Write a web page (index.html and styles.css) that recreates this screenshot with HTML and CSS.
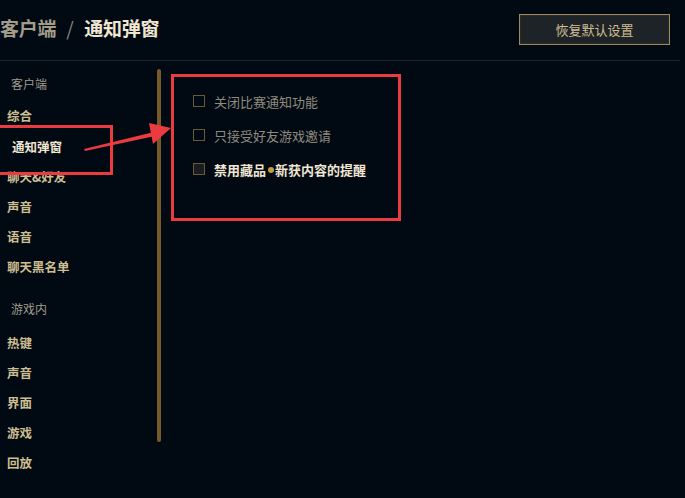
FILE: index.html
```html
<!DOCTYPE html>
<html lang="zh-CN">

<head>
    <meta charset="UTF-8">
    <meta name="viewport" content="width=device-width, initial-scale=1.0">
    <title>通知弹窗</title>
    <link rel="stylesheet" href="styles.css">
</head>

<body>
    <div class="page">
        <div class="header">
            <h1 class="title">
                <span class="crumb">客户端</span>
                <span class="sep">/</span>
                <span class="current">通知弹窗</span>
            </h1>
            <button class="reset">恢复默认设置</button>
        </div>

        <div class="main">
            <div class="sidebar">
                <div class="group-label">客户端</div>
                <div class="nav-item">综合</div>
                <div class="nav-item active">通知弹窗</div>
                <div class="nav-item">聊天&amp;好友</div>
                <div class="nav-item">声音</div>
                <div class="nav-item">语音</div>
                <div class="nav-item">聊天黑名单</div>

                <div class="group-label second">游戏内</div>
                <div class="nav-item first">热键</div>
                <div class="nav-item">声音</div>
                <div class="nav-item">界面</div>
                <div class="nav-item">游戏</div>
                <div class="nav-item">回放</div>
            </div>

            <div class="scrollbar"></div>

            <div class="content">
                <label class="option">
                    <span class="box"></span>
                    <span>关闭比赛通知功能</span>
                </label>
                <label class="option">
                    <span class="box"></span>
                    <span>只接受好友游戏邀请</span>
                </label>
                <label class="option bright">
                    <span class="box"></span>
                    <span>禁用藏品<i class="dot"></i>新获内容的提醒</span>
                </label>
            </div>
        </div>

        <!-- annotation overlay -->
        <div class="mark mark-nav"></div>
        <div class="mark mark-content"></div>
        <svg class="arrow" width="100" height="40" viewBox="0 0 100 40">
            <polygon points="0,38 70,21 71,25 1,40" fill="#ec3b3f" />
            <polygon points="65,12 87,17 69,33" fill="#ec3b3f" />
        </svg>
    </div>
</body>

</html>
```

FILE: styles.css
```css
body {
    margin: 0;
    padding: 0;
    background-color: #010a13;
    font-family: "Noto Sans CJK SC", "Noto Sans", sans-serif;
    color: #cdbe91;
    overflow: hidden;
}

.page {
    position: relative;
    width: 685px;
    height: 498px;
}

.header {
    display: flex;
    align-items: center;
    justify-content: space-between;
    height: 61px;
    padding: 0 10px 0 0;
    margin-right: 5px;
    border-bottom: 1px solid #1e2730;
    box-sizing: border-box;
}

.title {
    margin: -5px 0 0 0;
    font-size: 19px;
    font-weight: bold;
    letter-spacing: -0.3px;
}

.crumb {
    color: #a39c8b;
}

.sep {
    color: #8a8578;
    font-weight: normal;
    margin: 0 7px 0 6px;
}

.current {
    color: #f0e6d2;
}

.reset {
    width: 151px;
    height: 31px;
    margin-top: -2px;
    background-color: #1e2328;
    color: #cdbe91;
    border: 1px solid #9d8a5c;
    box-shadow: inset 0 0 0 1px #2a2a26;
    font-family: inherit;
    font-size: 13px;
    cursor: pointer;
}

.main {
    display: flex;
}

.sidebar {
    width: 157px;
    padding-top: 8px;
}

.group-label {
    padding-left: 11px;
    line-height: 30px;
    font-size: 12px;
    color: #a09b8c;
}

.group-label.second {
    margin-top: 12px;
}

.nav-item {
    padding-left: 7px;
    line-height: 30px;
    font-size: 12.5px;
    font-weight: bold;
    color: #cdbe91;
}

.group-label + .nav-item {
    margin-top: 2px;
}

.nav-item.active {
    padding-left: 12px;
    margin-top: 1px;
    color: #f0e6d2;
}

.nav-item.first {
    margin-top: 4px;
}

.scrollbar {
    width: 4px;
    height: 373px;
    margin-top: 8px;
    background-color: #785a28;
    border-radius: 2px;
}

.content {
    padding: 23px 0 0 32px;
}

.option {
    display: flex;
    align-items: center;
    height: 34px;
    font-size: 13px;
    color: #8f8a7e;
}

.option .box {
    width: 10px;
    height: 10px;
    margin-right: 9px;
    border: 1px solid #6a5a3c;
    background-color: #010a13;
}

.option.bright {
    color: #f0e6d2;
    font-weight: bold;
}

.option.bright .box {
    background-color: #1a1d20;
}

.dot {
    display: inline-block;
    width: 6px;
    height: 6px;
    margin: 0 1px 1px 2px;
    border-radius: 50%;
    background-color: #c89b3c;
    vertical-align: middle;
}

.mark {
    position: absolute;
    border: 3px solid #ec3b3f;
    box-sizing: border-box;
}

.mark-nav {
    left: -3px;
    top: 125px;
    width: 116px;
    height: 50px;
}

.mark-content {
    left: 171px;
    top: 74px;
    width: 230px;
    height: 147px;
}

.arrow {
    position: absolute;
    left: 84px;
    top: 111px;
}
```
